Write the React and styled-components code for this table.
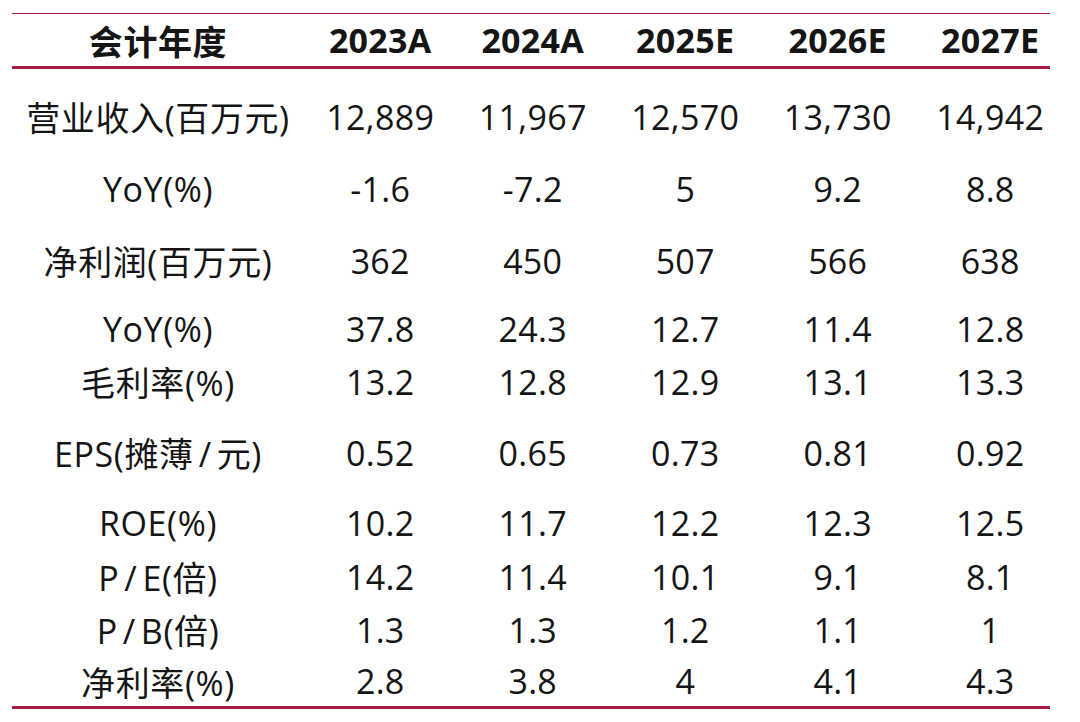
import React from 'react';
import styled, { createGlobalStyle } from 'styled-components';

const GlobalStyle = createGlobalStyle`
  html, body {
    margin: 0;
    padding: 0;
    background: #ffffff;
  }
  body {
    font-family: 'Open Sans', 'Noto Sans CJK SC', sans-serif;
    color: #151515;
  }
`;

const Page = styled.div`
  width: 1080px;
  height: 722px;
  padding: 13px 0 0 12px;
  box-sizing: border-box;
  overflow: hidden;
`;

const Table = styled.div`
  width: 1038px;
  border-top: 1px solid #a51d45;
  border-bottom: 3px solid #a51d45;
`;

const Row = styled.div`
  display: grid;
  grid-template-columns: 292px repeat(5, 152.5px);
  align-items: center;
  height: ${(p) => p.$h || 53}px;
  margin-top: ${(p) => p.$top || 0}px;
  font-size: 34px;
  white-space: nowrap;
`;

const HeadRow = styled(Row)`
  height: 52px;
  font-weight: 700;
  border-bottom: 3px solid #a51d45;
  width: 1038px;
`;

const Cell = styled.div`
  text-align: center;
  letter-spacing: 0.3px;
`;

const Label = styled(Cell)`
  letter-spacing: 0.6px;
`;

const Slash = styled.span`
  margin: 0 5px;
`;

const years = ['2023A', '2024A', '2025E', '2026E', '2027E'];

const rows = [
  { label: '营业收入(百万元)', values: ['12,889', '11,967', '12,570', '13,730', '14,942'], top: 21 },
  { label: 'YoY(%)', values: ['-1.6', '-7.2', '5', '9.2', '8.8'], top: 19 },
  { label: '净利润(百万元)', values: ['362', '450', '507', '566', '638'], top: 19 },
  { label: 'YoY(%)', values: ['37.8', '24.3', '12.7', '11.4', '12.8'], top: 15 },
  { label: '毛利率(%)', values: ['13.2', '12.8', '12.9', '13.1', '13.3'], top: 0 },
  { label: 'EPS(摊薄/元)', values: ['0.52', '0.65', '0.73', '0.81', '0.92'], top: 18 },
  { label: 'ROE(%)', values: ['10.2', '11.7', '12.2', '12.3', '12.5'], top: 17 },
  { label: 'P/E(倍)', values: ['14.2', '11.4', '10.1', '9.1', '8.1'], top: 1 },
  { label: 'P/B(倍)', values: ['1.3', '1.3', '1.2', '1.1', '1'], top: 0 },
  { label: '净利率(%)', values: ['2.8', '3.8', '4', '4.1', '4.3'], top: 0, h: 50 },
];

const renderLabel = (text) => {
  const parts = text.split('/');
  return parts.map((part, i) => (
    <React.Fragment key={i}>
      {i > 0 && <Slash>/</Slash>}
      {part}
    </React.Fragment>
  ));
};

const App = () => {
  return (
    <>
      <GlobalStyle />
      <Page>
        <Table>
          <HeadRow>
            <Label>会计年度</Label>
            {years.map((y) => (
              <Cell key={y}>{y}</Cell>
            ))}
          </HeadRow>
          {rows.map((r, i) => (
            <Row key={i} $top={r.top} $h={r.h}>
              <Label>{renderLabel(r.label)}</Label>
              {r.values.map((v, j) => (
                <Cell key={j}>{v}</Cell>
              ))}
            </Row>
          ))}
        </Table>
      </Page>
    </>
  );
};

export default App;
